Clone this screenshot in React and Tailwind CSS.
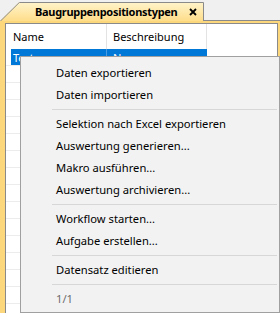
export default function App() {
  const rows = Array.from({ length: 15 });
  const Item = ({ children, disabled }) => (
    <div
      className={`h-[22px] flex items-center pl-[35px] text-[11.2px] ${
        disabled ? "text-[#6d6d6d]" : "text-black"
      }`}
    >
      {children}
    </div>
  );
  const Sep = () => (
    <div className="h-[7px] flex items-center pl-[31px] pr-[2px]">
      <div className="h-px w-full bg-[#d7d7d7]" />
    </div>
  );
  return (
    <div className="relative w-[280px] h-[313px] overflow-hidden bg-[#f0f0f0] flex flex-col font-['Noto_Sans',sans-serif] leading-none">
      {/* tab row */}
      <div className="h-[21px] flex shrink-0">
        <div className="relative mt-[2px] w-[204px] h-[19px] flex items-center pl-[35px] pr-[6px]">
          <svg className="absolute inset-0" width="204" height="19" viewBox="0 0 204 19">
            <defs>
              <linearGradient id="tg" x1="0" y1="0" x2="0" y2="1">
                <stop offset="0" stopColor="#fff4cc" />
                <stop offset="1" stopColor="#fedd8a" />
              </linearGradient>
            </defs>
            <polygon points="0,19 19,0 204,0 204,19" fill="url(#tg)" />
            <polyline points="0,19.5 19.3,0.5 203.5,0.5 203.5,19" fill="none" stroke="#8a8a8a" strokeWidth="1" />
          </svg>
          <span className="relative font-bold text-[11px] tracking-[-0.3px] text-black">Baugruppenpositionstypen</span>
          <svg className="relative ml-auto mr-[1px]" width="8" height="8" viewBox="0 0 8 8">
            <path d="M1 1 L7 7 M7 1 L1 7" stroke="#000" strokeWidth="1.8" />
          </svg>
        </div>
        <div className="flex-1 border-b border-[#8a8a8a]" />
      </div>
      {/* panel */}
      <div className="flex-1 bg-[#fdd77c] pl-[5px] pr-[2px] pt-[2px] flex">
        <div className="flex-1 bg-white border-t border-l border-r border-[#8a8a8a] flex flex-col">
          <div className="h-[25px] flex shrink-0 text-[11px] text-black">
            <div className="w-[101px] pl-[7px] flex items-center border-r border-[#e3e3e3]">Name</div>
            <div className="w-[100px] pl-[6px] flex items-center border-r border-[#e3e3e3]">Beschreibung</div>
            <div className="flex-1" />
          </div>
          <div className="h-[17px] flex shrink-0 text-[11px] text-white border-b border-[#ececec]">
            <div className="w-[5px]" />
            <div className="w-[96px] pl-[2px] bg-[#0078d7] flex items-center border-r border-[#4b9be0]">Test</div>
            <div className="w-[100px] pl-[6px] bg-[#0078d7] flex items-center">Neu</div>
            <div className="flex-1" />
          </div>
          {rows.map((_, i) => (
            <div key={i} className="h-[17px] shrink-0 border-b border-[#ececec] flex">
              <div className="w-[201px] border-r border-[#ececec]" />
            </div>
          ))}
        </div>
      </div>
      {/* context menu */}
      <div className="absolute left-[20px] top-[56px] w-[260px] h-[257px] bg-[#f2f2f2] border border-[#a0a0a0] pt-[5px] flex flex-col">
        <Item>Daten exportieren</Item>
        <Item>Daten importieren</Item>
        <Sep />
        <Item>Selektion nach Excel exportieren</Item>
        <Item>Auswertung generieren...</Item>
        <Item>Makro ausführen...</Item>
        <Item>Auswertung archivieren...</Item>
        <Sep />
        <Item>Workflow starten...</Item>
        <Item>Aufgabe erstellen...</Item>
        <Sep />
        <Item>Datensatz editieren</Item>
        <Sep />
        <Item disabled>1/1</Item>
      </div>
    </div>
  );
}
